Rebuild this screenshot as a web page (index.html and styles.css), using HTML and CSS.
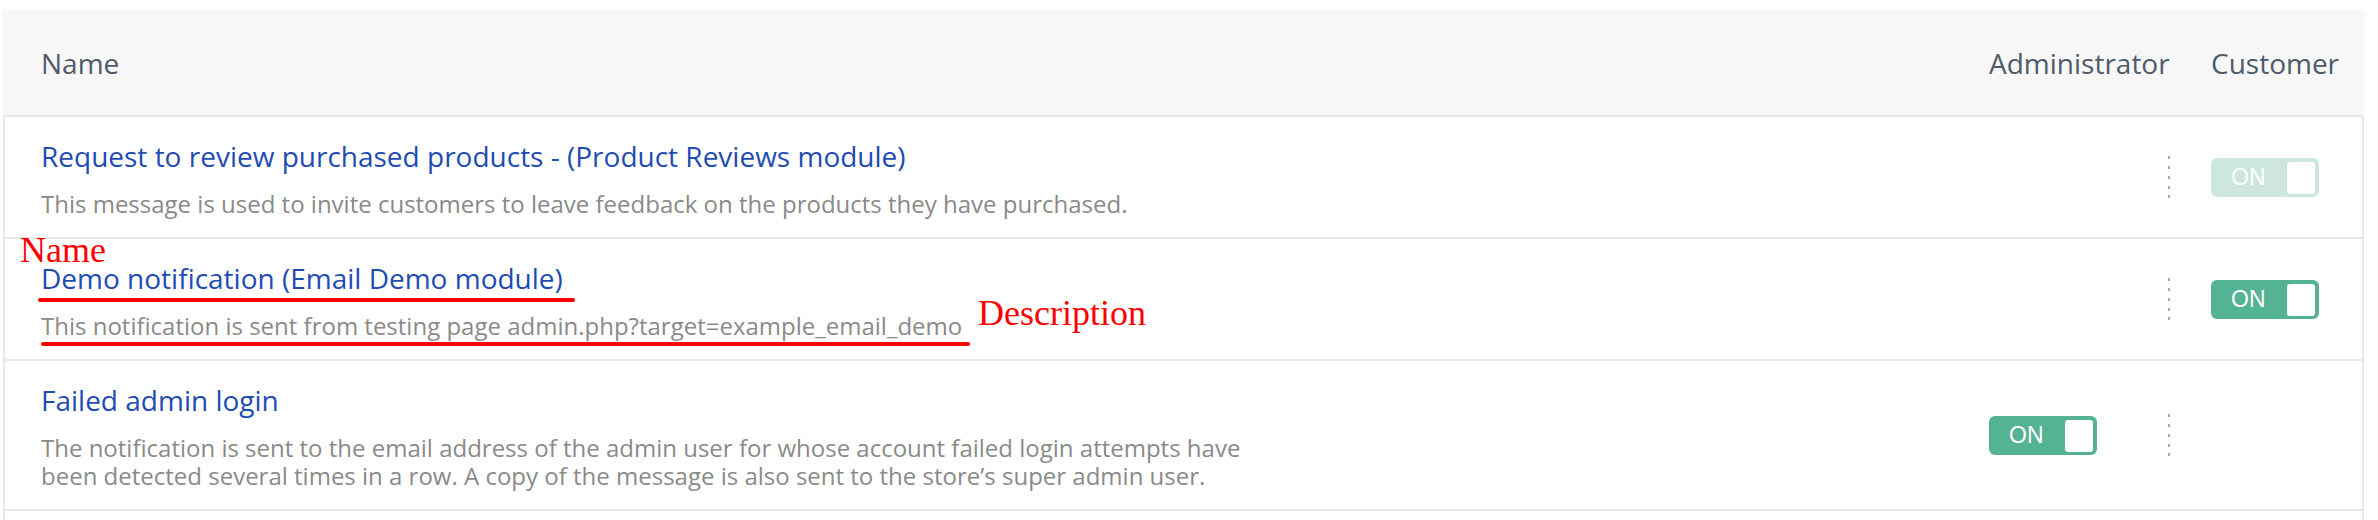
FILE: index.html
```html
<!DOCTYPE html>
<html lang="en">
<head>
<meta charset="utf-8">
<title>Notifications</title>
<link rel="stylesheet" href="styles.css">
</head>
<body>
<div class="page">
  <div class="table">
    <div class="thead">
      <div class="th th-name">Name</div>
      <div class="th th-admin">Administrator</div>
      <div class="th th-cust">Customer</div>
    </div>

    <div class="row">
      <div class="cell-name">
        <a class="title">Request to review purchased products - (Product Reviews module)</a>
        <p class="desc">This message is used to invite customers to leave feedback on the products they have purchased.</p>
      </div>
      <div class="cell-admin"></div>
      <div class="cell-dots"><svg class="dots" width="4" height="44" viewBox="0 0 4 44"><rect x="1" y="1" width="2" height="3"/><rect x="1" y="11" width="2" height="3"/><rect x="1" y="21" width="2" height="3"/><rect x="1" y="31" width="2" height="3"/><rect x="1" y="40" width="2" height="3"/></svg></div>
      <div class="cell-cust"><span class="toggle toggle-muted"><span class="toggle-label">ON</span><span class="knob"></span></span></div>
    </div>

    <div class="row">
      <span class="note note-name">Name</span>
      <span class="mark mark-name"></span>
      <span class="note note-desc">Description</span>
      <span class="mark mark-desc"></span>
      <div class="cell-name">
        <a class="title">Demo notification (Email Demo module)</a>
        <p class="desc">This notification is sent from testing page admin.php?target=example_email_demo</p>
      </div>
      <div class="cell-admin"></div>
      <div class="cell-dots"><svg class="dots" width="4" height="44" viewBox="0 0 4 44"><rect x="1" y="1" width="2" height="3"/><rect x="1" y="11" width="2" height="3"/><rect x="1" y="21" width="2" height="3"/><rect x="1" y="31" width="2" height="3"/><rect x="1" y="40" width="2" height="3"/></svg></div>
      <div class="cell-cust"><span class="toggle"><span class="toggle-label">ON</span><span class="knob"></span></span></div>
    </div>

    <div class="row">
      <div class="cell-name">
        <a class="title">Failed admin login</a>
        <p class="desc desc-wrap">The notification is sent to the email address of the admin user for whose account failed login attempts have been detected several times in a row. A copy of the message is also sent to the store’s super admin user.</p>
      </div>
      <div class="cell-admin"><span class="toggle"><span class="toggle-label">ON</span><span class="knob"></span></span></div>
      <div class="cell-dots"><svg class="dots" width="4" height="44" viewBox="0 0 4 44"><rect x="1" y="1" width="2" height="3"/><rect x="1" y="11" width="2" height="3"/><rect x="1" y="21" width="2" height="3"/><rect x="1" y="31" width="2" height="3"/><rect x="1" y="40" width="2" height="3"/></svg></div>
      <div class="cell-cust"></div>
    </div>

    <div class="row row-tail"></div>
  </div>
</div>
</body>
</html>
```

FILE: styles.css
```css
html, body {
  margin: 0;
  padding: 0;
  background: #ffffff;
  overflow: hidden;
}

body {
  font-family: "Open Sans", "Noto Sans", sans-serif;
  height: 520px;
}

.page {
  padding: 10px 14px 0 3px;
}

.table {
  display: flex;
  flex-direction: column;
}

.thead,
.row {
  display: grid;
  grid-template-columns: 1fr 179px 43px 151px;
  border-left: 2px solid #e8e8e8;
  border-right: 2px solid #e8e8e8;
  border-bottom: 2px solid #e8e8e8;
}

.thead {
  height: 105px;
  align-items: center;
  background: #f7f7f7;
  border-left-color: #f7f7f7;
  border-right-color: #f7f7f7;
}

.th {
  font-size: 28px;
  color: #4f5a6b;
  line-height: 36px;
}

.th-name {
  padding-left: 36px;
}

.th-admin {
  grid-column: 2 / 4;
}

.row {
  position: relative;
  align-items: center;
}

.cell-name {
  padding: 21px 0 19px 36px;
}

.title {
  display: block;
  font-size: 28px;
  line-height: 36px;
  color: #1f4cb3;
  text-decoration: none;
}

.desc {
  margin: 16px 0 0 0;
  font-size: 24px;
  line-height: 28px;
  color: #8a8a8a;
}

.desc-wrap {
  max-width: 1225px;
}

.cell-admin,
.cell-dots,
.cell-cust {
  display: flex;
  align-items: center;
}

.dots {
  display: block;
  fill: #a6a9ae;
  margin-left: -1px;
}

.toggle {
  box-sizing: border-box;
  width: 108px;
  height: 39px;
  border-radius: 6px;
  background: #54b295;
  display: flex;
  align-items: center;
  justify-content: space-between;
  padding: 4px 4px 3px 20px;
}

.toggle-muted {
  background: #cde7df;
}

.toggle-label {
  font-family: "Liberation Sans", Arial, sans-serif;
  font-size: 23px;
  color: #ffffff;
  line-height: 1;
}

.knob {
  width: 28px;
  height: 32px;
  background: #ffffff;
  border-radius: 3px;
}

.row-tail {
  height: 40px;
  border-bottom: none;
}

/* Annotations drawn over the screenshot */
.note {
  position: absolute;
  font-family: "Liberation Serif", "Times New Roman", serif;
  font-size: 36px;
  line-height: 36px;
  color: #ff0000;
  z-index: 2;
}

.note-name {
  left: 15px;
  top: -7px;
}

.note-desc {
  left: 973px;
  top: 56px;
}

.mark {
  position: absolute;
  background: #ff0000;
  border-radius: 2px;
  z-index: 2;
}

.mark-name {
  left: 33px;
  top: 59px;
  width: 537px;
  height: 4px;
}

.mark-desc {
  left: 36px;
  top: 103px;
  width: 929px;
  height: 4px;
}
```
